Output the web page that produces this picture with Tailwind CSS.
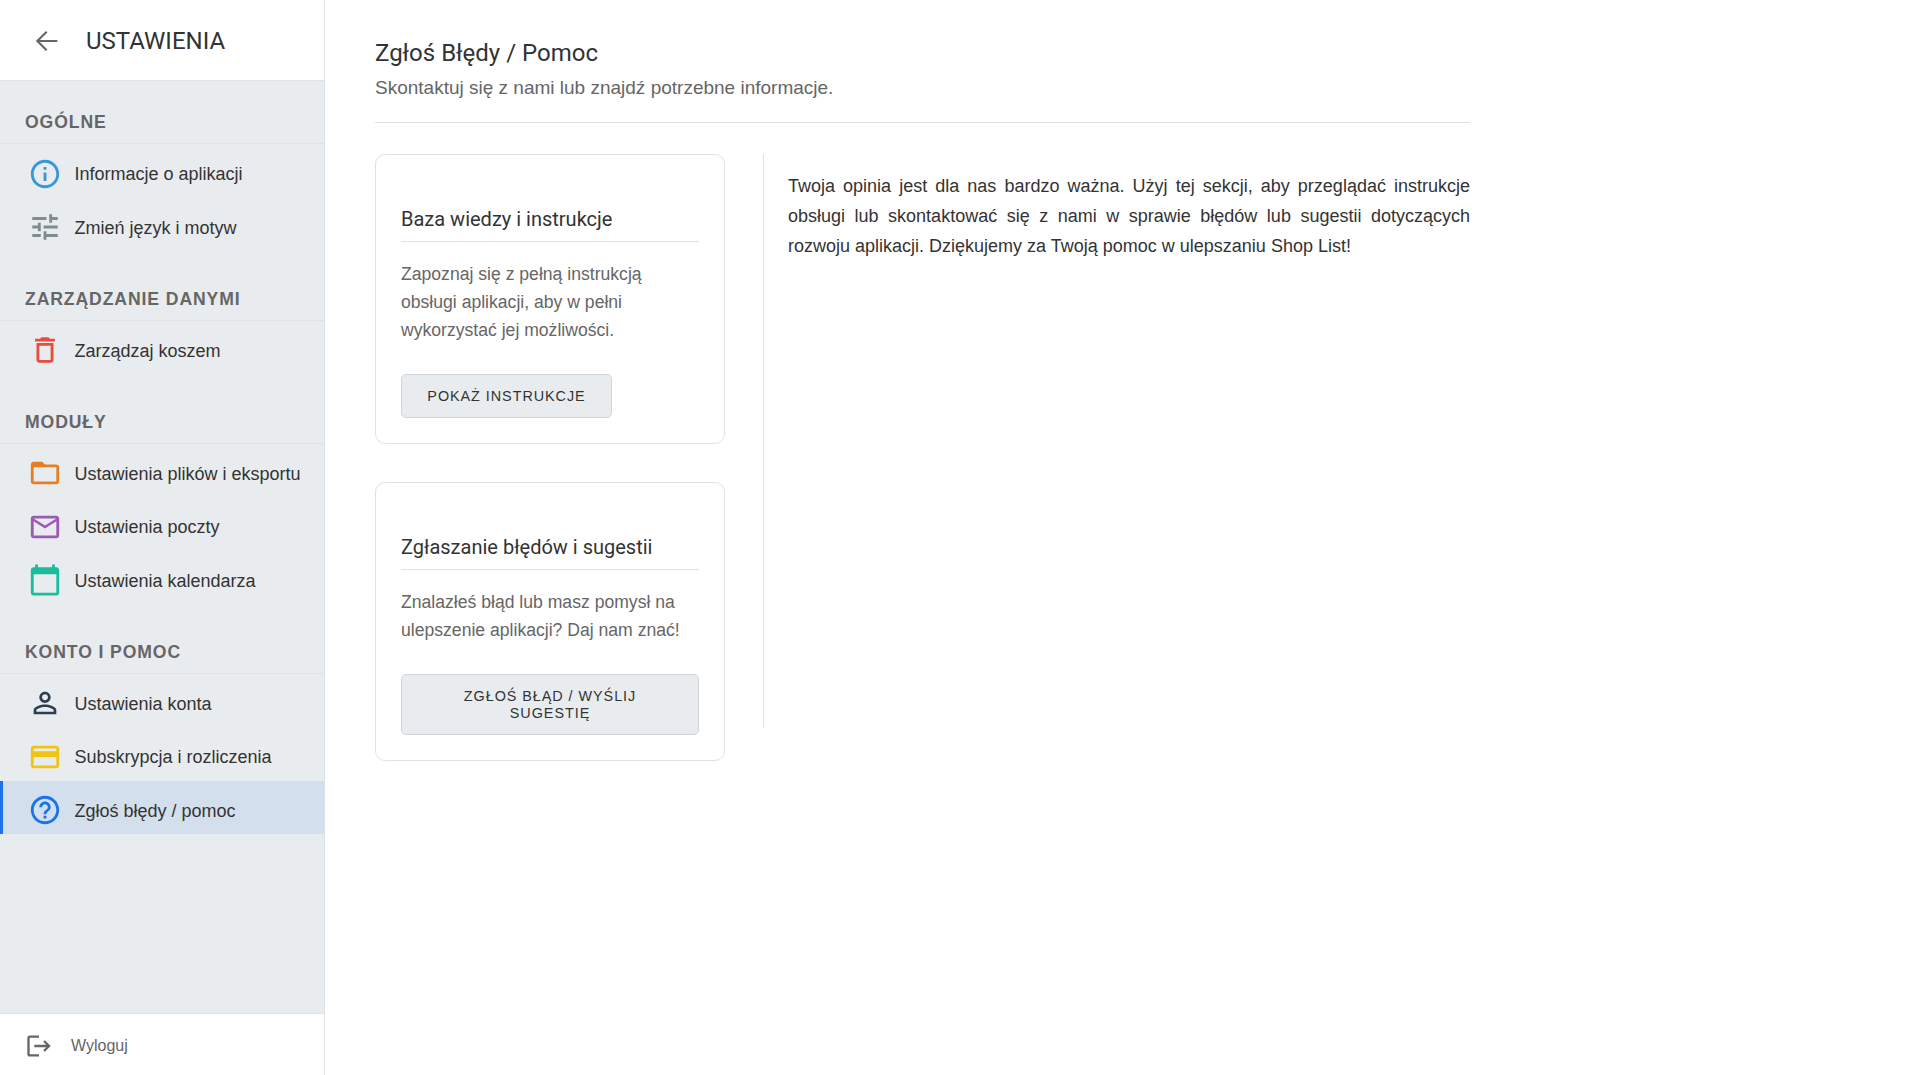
<!DOCTYPE html>
<html lang="pl">
<head>
  <meta charset="UTF-8">
  <title>Ustawienia</title>
  <script src="https://cdn.jsdelivr.net/npm/@tailwindcss/browser@4"></script>
</head>
<body class="bg-white text-[#333] font-['Liberation_Sans',Arial,sans-serif]">
  <div class="flex h-[1075px] overflow-hidden">
    <!-- sidebar -->
    <aside class="flex flex-col w-[325px] shrink-0 bg-[#e9ecef] border-r border-[#dee2e6]">
      <div class="flex items-center h-[81px] shrink-0 bg-white border-b border-[#dee2e6] pl-[30px] pt-[1px]">
        <svg class="w-[32px] h-[32px] text-[#666]" viewBox="0 0 24 24" fill="none" stroke="currentColor" stroke-width="1.6"><path d="M20.5 12H5.5M12.5 5l-7 7 7 7"/></svg>
        <h1 class="ml-[24px] text-[24px] leading-[32px] font-['Roboto',sans-serif] text-[#333]">USTAWIENIA</h1>
      </div>

      <nav class="flex-1 pt-[32px]">
        <h2 class="h-[31px] border-b border-[#dee2e6] pl-[25px] text-[17.6px] leading-[18px] font-bold tracking-[0.9px] text-[#666]">OGÓLNE</h2>
        <ul class="text-[18px] text-[#333]">
          <li class="flex items-center h-[53.5px] pt-[7.5px] pl-[28px] gap-[12.5px]">
            <svg class="w-[34px] h-[34px] -mt-[1.5px] text-[#3498db]" viewBox="0 0 24 24" fill="currentColor"><path d="M11 7h2v2h-2zm0 4h2v6h-2zm1-9C6.48 2 2 6.48 2 12s4.48 10 10 10 10-4.48 10-10S17.52 2 12 2zm0 18c-4.41 0-8-3.59-8-8s3.59-8 8-8 8 3.59 8 8-3.59 8-8 8z"/></svg>
            <span>Informacje o aplikacji</span>
          </li>
          <li class="flex items-center h-[53.5px] pt-[7.5px] pl-[28px] gap-[12.5px]">
            <svg class="w-[34px] h-[34px] -mt-[1.5px] text-[#7f8c8d]" viewBox="0 0 24 24" fill="currentColor"><path d="M3 17v2h6v-2H3zM3 5v2h10V5H3zm10 16v-2h8v-2h-8v-2h-2v6h2zM7 9v2H3v2h4v2h2V9H7zm14 4v-2H11v2h10zm-6-4h2V7h4V5h-4V3h-2v6z"/></svg>
            <span>Zmień język i motyw</span>
          </li>
        </ul>

        <h2 class="mt-[38.5px] h-[31px] border-b border-[#dee2e6] pl-[25px] text-[17.6px] leading-[18px] font-bold tracking-[0.9px] text-[#666]">ZARZĄDZANIE DANYMI</h2>
        <ul class="text-[18px] text-[#333]">
          <li class="flex items-center h-[53.5px] pt-[7.5px] pl-[28px] gap-[12.5px]">
            <svg class="w-[34px] h-[34px] -mt-[1.5px] text-[#e74c3c]" viewBox="0 0 24 24" fill="currentColor"><path d="M6 19c0 1.1.9 2 2 2h8c1.1 0 2-.9 2-2V7H6v12zM8 9h8v10H8V9zm7.5-5l-1-1h-5l-1 1H5v2h14V4h-3.5z"/></svg>
            <span>Zarządzaj koszem</span>
          </li>
        </ul>

        <h2 class="mt-[38.5px] h-[31px] border-b border-[#dee2e6] pl-[25px] text-[17.6px] leading-[18px] font-bold tracking-[0.9px] text-[#666]">MODUŁY</h2>
        <ul class="text-[18px] text-[#333]">
          <li class="flex items-center h-[53.5px] pt-[7.5px] pl-[28px] gap-[12.5px]">
            <svg class="w-[34px] h-[34px] -mt-[1.5px] text-[#e67e22]" viewBox="0 0 24 24" fill="currentColor"><path d="M20 6h-8l-2-2H4c-1.1 0-1.99.9-1.99 2L2 18c0 1.1.9 2 2 2h16c1.1 0 2-.9 2-2V8c0-1.1-.9-2-2-2zm0 12H4V8h16v10z"/></svg>
            <span>Ustawienia plików i eksportu</span>
          </li>
          <li class="flex items-center h-[53.5px] pt-[7.5px] pl-[28px] gap-[12.5px]">
            <svg class="w-[34px] h-[34px] -mt-[1.5px] text-[#9b59b6]" viewBox="0 0 24 24" fill="currentColor"><path d="M20 4H4c-1.1 0-1.99.9-1.99 2L2 18c0 1.1.9 2 2 2h16c1.1 0 2-.9 2-2V6c0-1.1-.9-2-2-2zm0 14H4V8l8 5 8-5v10zm-8-7L4 6h16l-8 5z"/></svg>
            <span>Ustawienia poczty</span>
          </li>
          <li class="flex items-center h-[53.5px] pt-[7.5px] pl-[28px] gap-[12.5px]">
            <svg class="w-[34px] h-[34px] -mt-[1.5px] text-[#1abc9c]" viewBox="0 0 24 24" fill="currentColor"><path d="M20 3h-1V1h-2v2H7V1H5v2H4c-1.1 0-2 .9-2 2v16c0 1.1.9 2 2 2h16c1.1 0 2-.9 2-2V5c0-1.1-.9-2-2-2zm0 18H4V8h16v13z"/></svg>
            <span>Ustawienia kalendarza</span>
          </li>
        </ul>

        <h2 class="mt-[38.5px] h-[31px] border-b border-[#dee2e6] pl-[25px] text-[17.6px] leading-[18px] font-bold tracking-[0.9px] text-[#666]">KONTO I POMOC</h2>
        <ul class="text-[18px] text-[#333]">
          <li class="flex items-center h-[53.5px] pt-[7.5px] pl-[28px] gap-[12.5px]">
            <svg class="w-[34px] h-[34px] -mt-[1.5px] text-[#2c3e50]" viewBox="0 0 24 24" fill="currentColor"><path d="M12 5.9c1.16 0 2.1.94 2.1 2.1s-.94 2.1-2.1 2.1S9.9 9.16 9.9 8s.94-2.1 2.1-2.1m0 9c2.97 0 6.1 1.46 6.1 2.1v1.1H5.9V17c0-.64 3.13-2.1 6.1-2.1M12 4C9.79 4 8 5.79 8 8s1.79 4 4 4 4-1.79 4-4-1.79-4-4-4zm0 9c-2.67 0-8 1.34-8 4v3h16v-3c0-2.66-5.33-4-8-4z"/></svg>
            <span>Ustawienia konta</span>
          </li>
          <li class="flex items-center h-[53.5px] pt-[7.5px] pl-[28px] gap-[12.5px]">
            <svg class="w-[34px] h-[34px] -mt-[1.5px] text-[#f1c40f]" viewBox="0 0 24 24" fill="currentColor"><path d="M20 4H4c-1.11 0-1.99.89-1.99 2L2 18c0 1.11.89 2 2 2h16c1.11 0 2-.89 2-2V6c0-1.11-.89-2-2-2zm0 14H4v-6h16v6zm0-10H4V6h16v2z"/></svg>
            <span>Subskrypcja i rozliczenia</span>
          </li>
          <li class="flex items-center h-[53.5px] pt-[7.5px] pl-[25px] gap-[12.5px] bg-[#d3dfed] border-l-[3px] border-[#1a73e8]">
            <svg class="w-[34px] h-[34px] -mt-[1.5px] text-[#1a73e8]" viewBox="0 0 24 24" fill="currentColor"><path d="M11 18h2v-2h-2v2zm1-16C6.48 2 2 6.48 2 12s4.48 10 10 10 10-4.48 10-10S17.52 2 12 2zm0 18c-4.41 0-8-3.59-8-8s3.59-8 8-8 8 3.59 8 8-3.59 8-8 8zm0-14c-2.21 0-4 1.79-4 4h2c0-1.1.9-2 2-2s2 .9 2 2c0 2-3 1.75-3 5h2c0-2.25 3-2.5 3-5 0-2.21-1.79-4-4-4z"/></svg>
            <span>Zgłoś błędy / pomoc</span>
          </li>
        </ul>
      </nav>

      <div class="flex items-center h-[62px] shrink-0 bg-white border-t border-[#dee2e6] pl-[25px] pt-[3px] gap-[18px] text-[#666]">
        <svg class="w-[28px] h-[28px]" viewBox="0 0 24 24" fill="currentColor"><path d="M17 7l-1.41 1.41L18.17 11H8v2h10.17l-2.58 2.58L17 17l5-5zM4 5h8V3H4c-1.1 0-2 .9-2 2v14c0 1.1.9 2 2 2h8v-2H4V5z"/></svg>
        <span class="text-[16px]">Wyloguj</span>
      </div>
    </aside>

    <!-- content -->
    <main class="w-[1145px] pl-[50px] pr-0">
      <div class="pt-[37px] pb-[22px] border-b border-[#dee2e6]">
        <h2 class="text-[24px] leading-[32px] font-['Roboto',sans-serif] text-[#333]">Zgłoś Błędy / Pomoc</h2>
        <p class="mt-[7px] text-[19px] leading-[24px] text-[#666]">Skontaktuj się z nami lub znajdź potrzebne informacje.</p>
      </div>

      <div class="flex mt-[31px] items-start">
        <div class="w-[350px] shrink-0 flex flex-col gap-[38px]">
          <section class="rounded-[10px] border border-[#dee2e6] bg-white pt-[50px] px-[25px] pb-[25px]">
            <h3 class="pb-[8px] border-b border-[#dee2e6] text-[20px] leading-[28px] font-['Roboto',sans-serif] text-[#333]">Baza wiedzy i instrukcje</h3>
            <p class="mt-[18px] text-[17.6px] leading-[28px] text-[#666]">Zapoznaj się z pełną instrukcją obsługi aplikacji, aby w pełni wykorzystać jej możliwości.</p>
            <button class="mt-[30px] block w-[211px] h-[44px] pt-[2px] rounded-[5px] border border-[#ced4da] bg-[#e9ecef] text-[14.4px] tracking-[0.95px] text-[#333]">POKAŻ INSTRUKCJE</button>
          </section>
          <section class="rounded-[10px] border border-[#dee2e6] bg-white pt-[50px] px-[25px] pb-[25px]">
            <h3 class="pb-[8px] border-b border-[#dee2e6] text-[20px] leading-[28px] font-['Roboto',sans-serif] text-[#333]">Zgłaszanie błędów i sugestii</h3>
            <p class="mt-[18px] text-[17.6px] leading-[28px] text-[#666]">Znalazłeś błąd lub masz pomysł na ulepszenie aplikacji? Daj nam znać!</p>
            <button class="mt-[30px] block w-full h-[61px] px-[24px] rounded-[5px] border border-[#ced4da] bg-[#e9ecef] text-[14.4px] leading-[17px] tracking-[0.95px] text-[#333]">ZGŁOŚ BŁĄD / WYŚLIJ SUGESTIĘ</button>
          </section>
        </div>
        <div class="ml-[38px] w-[708px] h-[574px] border-l border-[#dee2e6] pl-[24px] pt-[17px]">
          <p class="text-[18px] leading-[30px] text-justify text-[#333]">Twoja opinia jest dla nas bardzo ważna. Użyj tej sekcji, aby przeglądać instrukcje obsługi lub skontaktować się z nami w sprawie błędów lub sugestii dotyczących rozwoju aplikacji. Dziękujemy za Twoją pomoc w ulepszaniu Shop List!</p>
        </div>
      </div>
    </main>
  </div>
</body>
</html>
